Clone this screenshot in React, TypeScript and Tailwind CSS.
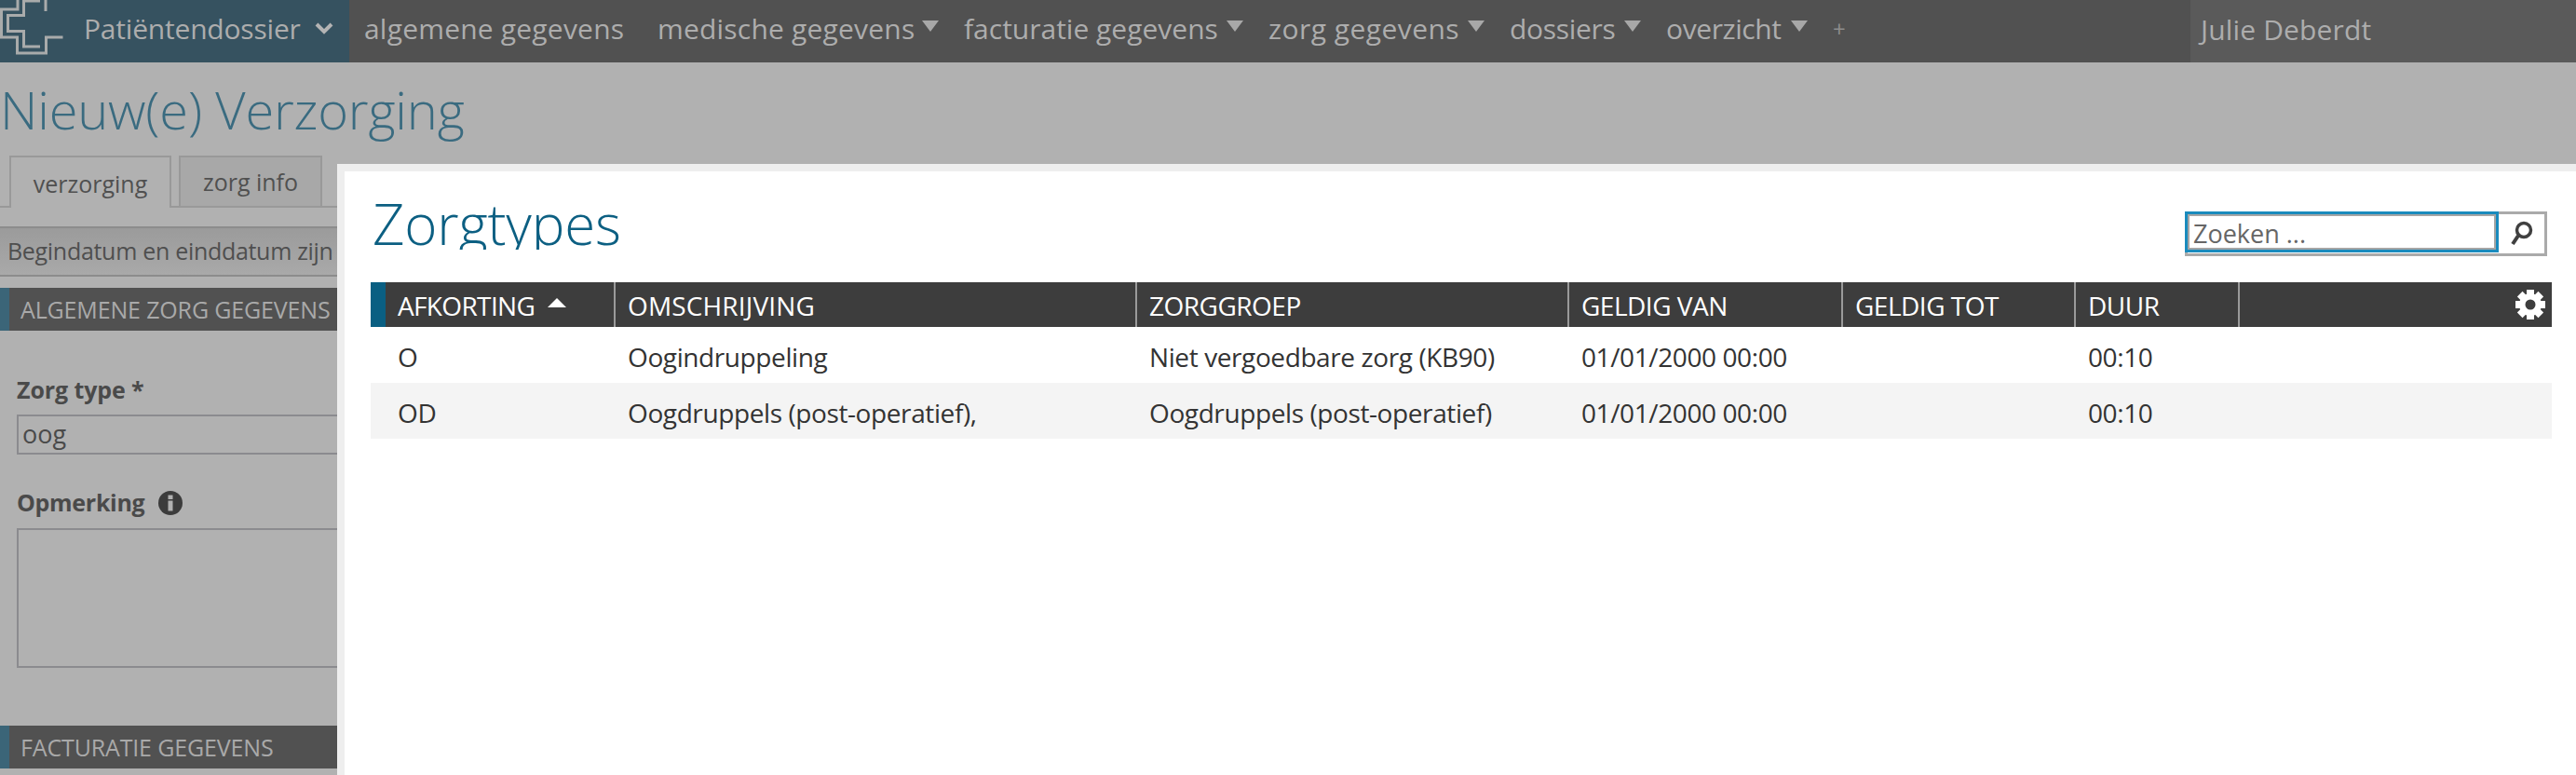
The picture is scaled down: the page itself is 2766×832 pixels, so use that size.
const navItems = [
  { label: "medische gegevens", cls: "w-[276px] tracking-[0.2px]" },
  { label: "facturatie gegevens", cls: "w-[274px] tracking-[0px]" },
  { label: "zorg gegevens", cls: "w-[206px] tracking-[0.45px]" },
  { label: "dossiers", cls: "w-[115px] tracking-[-0.3px]" },
  { label: "overzicht", cls: "w-[126px] tracking-[-0.4px]" },
];

const columns = [
  { label: "AFKORTING", head: "w-[247px] pl-[13px] tracking-[-0.65px]", cell: "w-[263px] pl-[29px]" },
  { label: "OMSCHRIJVING", head: "w-[560px] pl-[13px] tracking-[0.15px]", cell: "w-[560px] pl-[13px]" },
  { label: "ZORGGROEP", head: "w-[464px] pl-[13px] tracking-[-0.5px]", cell: "w-[464px] pl-[13px]" },
  { label: "GELDIG VAN", head: "w-[294px] pl-[13px] tracking-[-0.5px]", cell: "w-[294px] pl-[13px]" },
  { label: "GELDIG TOT", head: "w-[250px] pl-[13px] tracking-[-0.5px]", cell: "w-[250px] pl-[13px]" },
  { label: "DUUR", head: "w-[176px] pl-[13px] tracking-[-0.5px]", cell: "w-[176px] pl-[13px]" },
];

const rows = [
  ["O", "Oogindruppeling", "Niet vergoedbare zorg (KB90)", "01/01/2000 00:00", "", "00:10"],
  ["OD", "Oogdruppels (post-operatief),", "Oogdruppels (post-operatief)", "01/01/2000 00:00", "", "00:10"],
];

function Logo() {
  return (
    <svg width="70" height="62" viewBox="0 0 70 62" fill="none" stroke="#a9abab" strokeWidth="3" className="shrink-0">
      <path d="M19 0V10H1.500V40H18.500V57H49.500V40H67.500" />
      <path d="M25.500 0V16.500H8.500V33.500H25.500V50H43" />
      <path d="M27 1H43" />
      <path d="M49 0V12" />
    </svg>
  );
}

function Caret() {
  return <span className="mb-[6px] ml-[8px] h-0 w-0 border-x-[9.500px] border-t-[12px] border-x-transparent border-t-[#a8a8a8]" />;
}

function Section({ title }: { title: string }) {
  return (
    <div className="flex h-[46px] bg-[#515151] text-[25px] text-[#a9a9a9]">
      <div className="w-[10px] bg-[#3b6578]" />
      <div className="flex items-center pt-[2px] pl-[12px] tracking-[-0.15px]">{title}</div>
    </div>
  );
}

function Gear() {
  const teeth = [0, 45, 90, 135];
  return (
    <svg width="34" height="34" viewBox="0 0 34 34">
      {teeth.map((a) => (
        <rect key={a} x="13" y="1" width="8" height="32" fill="#fff" transform={`rotate(${a} 17 17)`} />
      ))}
      <circle cx="17" cy="17" r="12" fill="#fff" />
      <circle cx="17" cy="17" r="5.500" fill="#3d3d3d" />
    </svg>
  );
}

export default function App() {
  return (
    <div className="relative h-[832px] w-[2766px] overflow-hidden bg-[#b1b1b1] font-['Open_Sans',sans-serif] font-normal">
      {/* top menu */}
      <div className="flex h-[67px] items-center bg-[#515151] text-[30px] text-[#adadad]">
        <div className="flex h-full w-[375px] items-center bg-[#365260]">
          <div className="self-start">
            <Logo />
          </div>
          <span className="mb-[6px] ml-[20px] w-[232px] tracking-[-0.2px] whitespace-nowrap">Patiëntendossier</span>
          <svg width="20" height="14" viewBox="0 0 20 14" fill="none" stroke="#b4b4b4" strokeWidth="4" className="mb-[6px] ml-[16px] shrink-0">
            <path d="M2 2L10 10L18 2" />
          </svg>
        </div>
        <span className="mb-[6px] ml-[16px] w-[315px] tracking-[0.2px]">algemene gegevens</span>
        {navItems.map((item) => (
          <div key={item.label} className="mr-[27px] mb-[6px] flex items-center last:mr-[30px]">
            <span className={`${item.cls} whitespace-nowrap`}>{item.label}</span>
            <Caret />
          </div>
        ))}
        <span className="mb-[6px] text-[24px] text-[#8d8d8d]">+</span>
        <div className="ml-auto flex h-full w-[414px] items-center bg-[#5a5a5a] pb-[4px] pl-[11px] tracking-[0.15px]">Julie Deberdt</div>
      </div>

      {/* page behind the dialog */}
      <div className="flex h-[100px] items-center">
        <h1 className="text-[56px] leading-none font-light tracking-[-0.2px] text-[#3a6b80]">Nieuw(e) Verzorging</h1>
      </div>

      <div className="flex h-[56px] items-end border-b-2 border-[#999] pl-[10px] text-[25px] text-[#505050]">
        <div className="-mb-[2px] flex h-[56px] w-[174px] items-center justify-center border-x-2 border-t-2 border-[#999] bg-[#b1b1b1] pt-[4px]">verzorging</div>
        <div className="ml-[8px] flex h-[54px] w-[154px] items-center justify-center border-2 border-b-0 border-[#999] bg-[#a8a8a8] pt-[2px]">zorg info</div>
      </div>

      <div className="mt-[20px] flex h-[54px] items-center border-y-2 border-[#8c8c8c] bg-gradient-to-b from-[#9b9b9b] to-[#a9a9a9] pl-[8px] text-[25px] tracking-[-0.3px] whitespace-nowrap text-[#4f4f4f]">
        Begindatum en einddatum zijn verplicht
      </div>

      <div className="mt-[12px]">
        <Section title="ALGEMENE ZORG GEGEVENS" />
      </div>

      <div className="pl-[18px]">
        <label className="mt-[46px] block text-[25px] leading-[34px] font-bold tracking-[-0.1px] text-[#4a4a4a]">Zorg type *</label>
        <div className="mt-[10px] flex h-[43px] w-[600px] items-center border-2 border-[#8b8b8f] pl-[4px] text-[27px] text-[#4a4a4a]">oog</div>
        <div className="mt-[35px] flex h-[34px] items-center">
          <label className="text-[25px] font-bold tracking-[-0.3px] text-[#4a4a4a]">Opmerking</label>
          <svg width="26" height="26" viewBox="0 0 26 26" className="ml-[15px]">
            <circle cx="13" cy="13" r="13" fill="#3c3c3c" />
            <rect x="10.500" y="4.500" width="5" height="4.500" fill="#b1b1b1" />
            <rect x="10.500" y="10.500" width="5" height="11" fill="#b1b1b1" />
          </svg>
        </div>
        <div className="mt-[10px] h-[150px] w-[600px] border-2 border-[#8b8b8f]" />
      </div>

      <div className="mt-[62px]">
        <Section title="FACTURATIE GEGEVENS" />
      </div>

      {/* dialog */}
      <div className="absolute top-[176px] right-0 bottom-0 left-[362px] border-t-8 border-l-8 border-[#eeeeee] bg-white pl-[28px]">
        <div className="flex h-[119px]">
          <h2 className="mt-[16px] ml-[2px] h-[68px] overflow-hidden text-[60px] leading-[80px] font-light tracking-[-0.2px] text-[#0c5f82]">Zorgtypes</h2>
          <div className="mt-[43px] mr-[31px] ml-auto flex h-[48px] w-[389px] border-[3px] border-[#aaaaaa]">
            <div className="-mt-[3px] -ml-[3px] flex h-[44px] w-[337px] items-center border-[3px] border-[#1a8bbd] pt-[5px] pl-[6px] text-[27px] text-[#666666] outline-2 -outline-offset-[5px] outline-[#a5a5a5]">Zoeken ...</div>
            <div className="flex flex-1 items-center justify-center">
              <svg width="26" height="30" viewBox="0 0 26 30" fill="none" stroke="#404040" strokeWidth="3.500">
                <circle cx="15" cy="11" r="7.500" />
                <path d="M9 17L3 26" strokeWidth="4" />
              </svg>
            </div>
          </div>
        </div>

        <div className="mr-[26px] text-[28px]">
          <div className="flex h-[48px] border-l-[16px] border-[#0a5f82] bg-[#3d3d3d] text-white">
            {columns.map((col, i) => (
              <div key={col.label} className={`flex items-center border-r-2 border-[#9a9a9a] pt-[2px] ${col.head}`}>
                {col.label}
                {i === 0 && <span className="mb-[6px] ml-[14px] h-0 w-0 border-x-[10px] border-b-[10px] border-x-transparent border-b-white" />}
              </div>
            ))}
            <div className="flex flex-1 items-center justify-end pr-[6px]">
              <Gear />
            </div>
          </div>
          {rows.map((row, r) => (
            <div key={row[0]} className={`flex h-[60px] items-center pt-[4px] tracking-[-0.4px] text-[#333333] ${r === 1 ? "bg-[#f4f4f4]" : ""}`}>
              {row.map((cell, c) => (
                <div key={c} className={`whitespace-nowrap ${columns[c].cell}`}>
                  {cell}
                </div>
              ))}
            </div>
          ))}
        </div>
      </div>
    </div>
  );
}
